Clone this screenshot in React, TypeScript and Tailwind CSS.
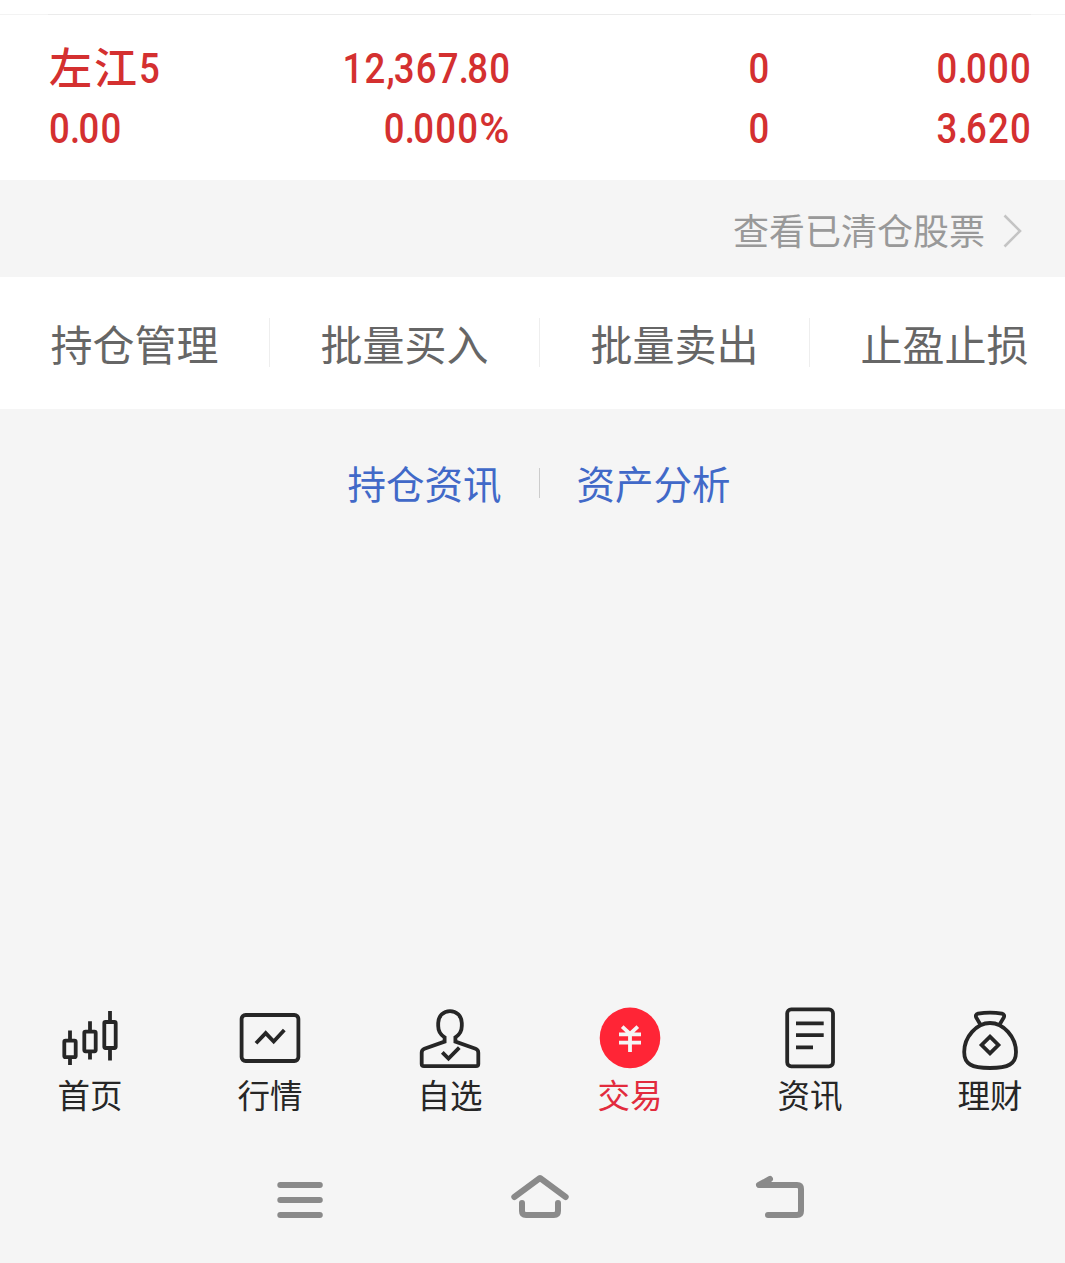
import type { ReactNode } from "react";

type Holding = {
  name: string;
  code: string;
  value: string;
  profit: string;
  profitRate: string;
  amount: string;
  available: string;
  cost: string;
  price: string;
};

const holding: Holding = {
  name: "左江",
  code: "5",
  value: "12,367.80",
  profit: "0.00",
  profitRate: "0.000%",
  amount: "0",
  available: "0",
  cost: "0.000",
  price: "3.620",
};

const actions = ["持仓管理", "批量买入", "批量卖出", "止盈止损"];

// Separators are set tighter than the digits, the percent sign a bit wider
const glyphClass: Record<string, string> = {
  ".": "-ml-px tracking-[-2px]",
  ",": "tracking-[-1px]",
  "%": "inline-block origin-right scale-x-[1.12] ml-[4px]",
};

function Num({ value, left }: { value: string; left?: boolean }) {
  return (
    <span
      className={`inline-block whitespace-nowrap font-['Roboto',sans-serif] text-[42.5px] font-medium tracking-[1.4px] scale-x-[0.86] ${left ? "origin-left" : "origin-right -mr-[2px]"}`}
    >
      {value.split("").map((c, i) => (
        <span key={i} className={glyphClass[c]}>
          {c}
        </span>
      ))}
    </span>
  );
}

function Icon({ children }: { children: ReactNode }) {
  return (
    <svg width="64" height="64" viewBox="0 0 64 64" fill="none" stroke="currentColor" strokeWidth="3.8">
      {children}
    </svg>
  );
}

const tabs: { label: string; active?: boolean; icon: ReactNode }[] = [
  {
    label: "首页",
    icon: (
      <Icon>
        <rect x="6.3" y="34.7" width="11.4" height="16.4" rx="1.2" />
        <rect x="26.3" y="25.7" width="11.4" height="19.6" rx="1.2" />
        <rect x="46.3" y="16" width="11.4" height="26" rx="1.2" />
        <path d="M12 24.4V34M12 52v7M32 15.3V25M32 46v7.4M52 5v10M52 43v11.4" />
      </Icon>
    ),
  },
  {
    label: "行情",
    icon: (
      <Icon>
        <rect x="3.6" y="9" width="56.8" height="46" rx="4" />
        <path d="M18 37.3l9.7-10.2 8 8.4L46.3 24" />
      </Icon>
    ),
  },
  {
    label: "自选",
    icon: (
      <Icon>
        <path d="M26.6 35.6V31.4C22.6 28.8 20.2 24.6 20.2 20V17C20.2 10 25.5 5.2 32 5.2S43.8 10 43.8 17v3c0 4.6-2.4 8.8-6.4 11.4v4.2l20.2 7.2q2.7 1 2.7 4V58q0 2.2-2.3 2.2H6Q3.7 60.2 3.7 58V46.8q0-3 2.7-4z" />
        <path d="M24.3 46.3l6.2 6.2L41.3 41.7" />
      </Icon>
    ),
  },
  {
    label: "交易",
    active: true,
    icon: (
      <Icon>
        <circle cx="32" cy="31.9" r="30.3" fill="#ff2536" stroke="none" />
        <path d="M24.2 20.6l7.8 7.2 7.8-7.2M21 28.3h22M21 36.7h22M32 27.5V46" stroke="#f5f5f5" />
      </Icon>
    ),
  },
  {
    label: "资讯",
    icon: (
      <Icon>
        <rect x="9.2" y="3.3" width="45.8" height="57" rx="4" />
        <path d="M18 17.3h27.7M18 29.2h27.7M18 41.3h17" />
      </Icon>
    ),
  },
  {
    label: "理财",
    icon: (
      <Icon>
        <path d="M32 17C18.5 17 6.2 31 6.2 46c0 12 7.3 16 25.8 16s26-4 26-16C58 31 45.5 17 32 17z" />
        <path d="M22.5 18.7l-4.3-7.2q-1.2-3 1.8-3.8Q32 5.4 44 7.7q3 .8 1.8 3.8l-4.3 7.2" />
        <path d="M32 30.6l8.4 8.4-8.4 8.4-8.4-8.4z" />
      </Icon>
    ),
  },
];

function SystemBar() {
  return (
    <div className="h-[93px] shrink-0 text-[#8a8a8a]">
      <svg width="1080" height="60" viewBox="0 0 1080 60" fill="none" stroke="currentColor" strokeWidth="6" strokeLinecap="round" strokeLinejoin="round">
        <path d="M280.3 15h39.5M280.3 30h39.5M280.3 45h39.5" />
        <path d="M514.3 27L540 8l25.700 19M522 33v8q0 4 4 4h28q4 0 4-4v-8" />
        <path d="M770 9l-11 6h38q4 0 4 4v22q0 4-4 4h-29" />
      </svg>
    </div>
  );
}

export default function App() {
  return (
    <div className="h-[1263px] w-[1065px] overflow-hidden bg-[#f5f5f5] font-['Noto_Sans_CJK_SC',sans-serif]">
      <div className="flex h-full w-[1080px] flex-col">
        {/* Holding row */}
        <div className="h-[180px] bg-white pt-3.5">
          <div className="h-px bg-[#f3f3f3] pl-12 pr-[49px]">
            <div className="h-px bg-[#ebebeb]" />
          </div>
          <div className="grid grid-cols-[240px_220px_260px_261px] px-[49px] pt-6 leading-[60px] text-[#d43030]">
            <div className="flex h-[60px] items-center whitespace-nowrap">
              <span className="mb-[9px] text-[43px] font-medium tracking-[2px]">{holding.name}</span>
              <Num value={holding.code} left />
            </div>
            <div className="h-[60px] text-right"><Num value={holding.value} /></div>
            <div className="h-[60px] text-right"><Num value={holding.amount} /></div>
            <div className="h-[60px] text-right"><Num value={holding.cost} /></div>
            <div className="h-[60px]"><Num value={holding.profit} left /></div>
            <div className="h-[60px] text-right"><Num value={holding.profitRate} /></div>
            <div className="h-[60px] text-right"><Num value={holding.available} /></div>
            <div className="h-[60px] text-right"><Num value={holding.price} /></div>
          </div>
        </div>

        {/* Closed positions link */}
        <div className="flex h-[97px] items-center justify-end pr-[57px] text-[36px] text-[#999999]">
          <span className="leading-[40px]">查看已清仓股票</span>
          <svg className="ml-[17px] mt-[5px] -mr-px" width="22" height="36" viewBox="0 0 22 36" fill="none" stroke="#c4c4c4" strokeWidth="2.6">
            <path d="M2.5 2.5L18 18 2.5 33.5" />
          </svg>
        </div>

        {/* Actions */}
        <div className="flex h-[132px] items-center bg-white pb-px">
          {actions.map((label, i) => (
            <div
              key={label}
              className={`flex h-[49px] w-[270px] items-center justify-center border-r text-[42px] leading-none text-[#666666] ${i < 3 ? "border-[#eeeeee]" : "border-transparent"}`}
            >
              {label}
            </div>
          ))}
        </div>

        {/* Links */}
        <div className="flex h-[148px] items-center justify-center pr-[2px] text-[38.5px] leading-none text-[#4169c8]">
          <span className="mb-[2px]">持仓资讯</span>
          <span className="mx-[37px] h-[30px] w-px bg-[#cccccc]" />
          <span className="mb-[2px]">资产分析</span>
        </div>

        {/* Tab bar */}
        <div className="mt-auto flex h-[164px] shrink-0">
          {tabs.map((tab) => (
            <div key={tab.label} className={`flex w-[180px] flex-col items-center ${tab.active ? "text-[#e22b3d]" : "text-[#262626]"}`}>
              {tab.icon}
              <span className="mt-[7px] text-[32.5px] leading-[34px]">{tab.label}</span>
            </div>
          ))}
        </div>

        <SystemBar />
      </div>
    </div>
  );
}
